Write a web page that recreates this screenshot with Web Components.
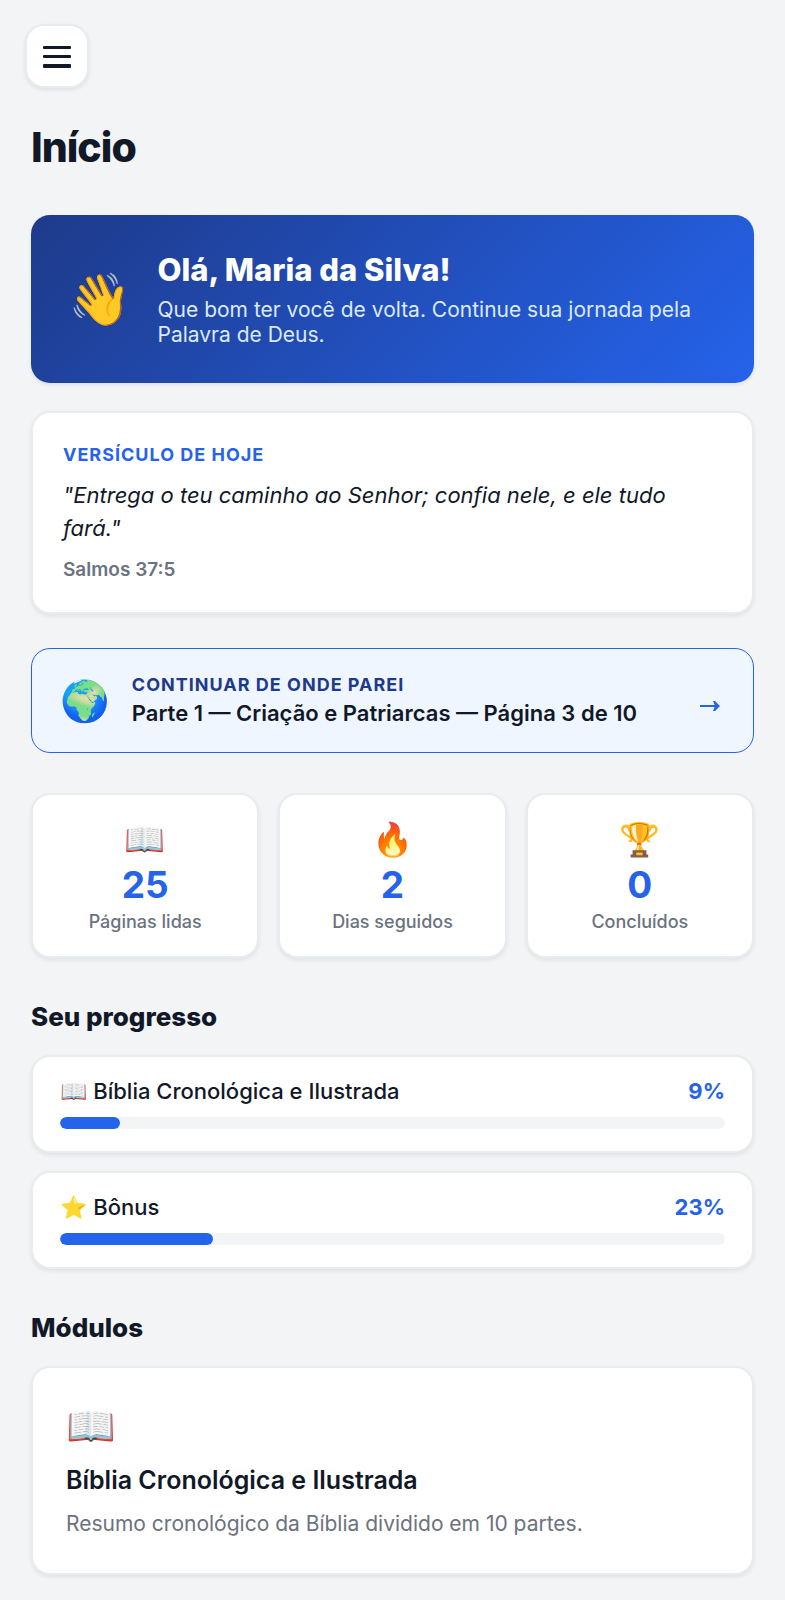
<!DOCTYPE html>
<html lang="pt-BR">
<head>
<meta charset="UTF-8">
<meta name="viewport" content="width=device-width, initial-scale=1">
<title>Início</title>
<style>
  :root {
    --bg: #f2f4f6;
    --card: #ffffff;
    --text: #111827;
    --muted: #6b7280;
    --primary: #2563eb;
    --primary-dark: #1e3a8a;
    --soft: #eff6ff;
    --border: #e9ebee;
    --track: #f3f4f6;
    --radius: 19px;
    --shadow: 0 2px 4px rgba(17, 24, 39, 0.08);
  }

  body {
    margin: 0;
    background: var(--bg);
    color: var(--text);
    font-family: Inter, "Liberation Sans", "Noto Color Emoji", sans-serif;
  }
</style>
</head>
<body>
<app-shell>
  <menu-button slot="menu"></menu-button>
  <span slot="title">Início</span>

  <welcome-banner icon="👋">
    <span slot="title">Olá, Maria da Silva!</span>
    Que bom ter você de volta. Continue sua jornada pela Palavra de Deus.
  </welcome-banner>

  <verse-card>
    <span slot="label">Versículo de hoje</span>
    "Entrega o teu caminho ao Senhor; confia nele, e ele tudo fará."
    <span slot="reference">Salmos 37:5</span>
  </verse-card>

  <continue-link icon="🌍" href="#parte-1">
    <span slot="label">Continuar de onde parei</span>
    Parte 1 — Criação e Patriarcas — Página 3 de 10
  </continue-link>

  <stat-row>
    <stat-card icon="📖" value="25">Páginas lidas</stat-card>
    <stat-card icon="🔥" value="2">Dias seguidos</stat-card>
    <stat-card icon="🏆" value="0">Concluídos</stat-card>
  </stat-row>

  <page-section>
    <span slot="title">Seu progresso</span>
    <progress-card percent="9">📖 Bíblia Cronológica e Ilustrada</progress-card>
    <progress-card percent="23">⭐ Bônus</progress-card>
  </page-section>

  <page-section>
    <span slot="title">Módulos</span>
    <module-card icon="📖" href="#biblia">
      <span slot="title">Bíblia Cronológica e Ilustrada</span>
      Resumo cronológico da Bíblia dividido em 10 partes.
    </module-card>
  </page-section>
</app-shell>

<script>
const base = `
  *, *::before, *::after { box-sizing: border-box; }
  :host { display: block; }
  h1, h2, h3, p, blockquote { margin: 0; }
  a { color: inherit; text-decoration: none; }
  .card {
    background: var(--card);
    border: 2px solid var(--border);
    border-radius: var(--radius);
    box-shadow: var(--shadow);
  }
`;

class AppShell extends HTMLElement {
  constructor() {
    super();
    this.attachShadow({ mode: 'open' });
    this.shadowRoot.innerHTML = `
      <style>
        ${base}
        header { padding: 24px 25px 0; }
        main { padding: 33px 31px 26px; }
        h1 {
          font-size: 41px;
          line-height: 52px;
          font-weight: 800;
          letter-spacing: -1px;
          margin-bottom: 42px;
        }
      </style>
      <header><slot name="menu"></slot></header>
      <main>
        <h1><slot name="title"></slot></h1>
        <slot></slot>
      </main>
    `;
  }
}

class MenuButton extends HTMLElement {
  constructor() {
    super();
    this.attachShadow({ mode: 'open' });
    this.shadowRoot.innerHTML = `
      <style>
        ${base}
        button {
          display: flex;
          align-items: center;
          justify-content: center;
          width: 64px;
          height: 64px;
          padding: 0;
          border-radius: 16px;
          color: var(--text);
          cursor: pointer;
        }
        svg { width: 28px; height: 28px; }
      </style>
      <button class="card" type="button" aria-label="Abrir menu">
        <svg viewBox="0 0 28 28" fill="currentColor">
          <rect x="0" y="4" width="28" height="3" rx="1"/>
          <rect x="0" y="13" width="28" height="3" rx="1"/>
          <rect x="0" y="22" width="28" height="4" rx="1"/>
        </svg>
      </button>
    `;
  }
}

class WelcomeBanner extends HTMLElement {
  constructor() {
    super();
    this.attachShadow({ mode: 'open' });
    this.shadowRoot.innerHTML = `
      <style>
        ${base}
        .banner {
          display: flex;
          align-items: center;
          gap: 26px;
          padding: 36px 37px;
          border-radius: var(--radius);
          background: linear-gradient(135deg, var(--primary-dark), var(--primary));
          box-shadow: var(--shadow);
          color: #fff;
        }
        .icon { font-size: 51px; line-height: 60px; }
        h2 { font-size: 31px; line-height: 38px; font-weight: 800; margin-bottom: 8px; }
        p { font-size: 21px; line-height: 25px; color: #dbeafe; }
      </style>
      <section class="banner">
        <span class="icon">${this.getAttribute('icon')}</span>
        <div>
          <h2><slot name="title"></slot></h2>
          <p><slot></slot></p>
        </div>
      </section>
    `;
  }
}

class VerseCard extends HTMLElement {
  constructor() {
    super();
    this.attachShadow({ mode: 'open' });
    this.shadowRoot.innerHTML = `
      <style>
        ${base}
        :host { margin-top: 28px; }
        .card { padding: 30px; }
        .label {
          font-size: 18px;
          line-height: 24px;
          font-weight: 700;
          letter-spacing: 1px;
          text-transform: uppercase;
          color: var(--primary);
          margin-bottom: 12px;
        }
        blockquote { font-size: 22px; line-height: 33px; font-style: italic; }
        .reference {
          font-size: 19px;
          line-height: 24px;
          font-weight: 600;
          color: var(--muted);
          margin-top: 13px;
        }
      </style>
      <section class="card">
        <p class="label"><slot name="label"></slot></p>
        <blockquote><slot></slot></blockquote>
        <p class="reference"><slot name="reference"></slot></p>
      </section>
    `;
  }
}

class ContinueLink extends HTMLElement {
  constructor() {
    super();
    this.attachShadow({ mode: 'open' });
    this.shadowRoot.innerHTML = `
      <style>
        ${base}
        :host { margin-top: 34px; }
        a {
          display: flex;
          align-items: center;
          gap: 22px;
          padding: 23px 32px 23px 28px;
          border: 1px solid var(--primary);
          border-radius: var(--radius);
          background: var(--soft);
        }
        .icon { font-size: 40px; line-height: 48px; }
        .body { flex: 1; }
        .label {
          font-size: 18px;
          line-height: 25px;
          font-weight: 700;
          letter-spacing: 1px;
          text-transform: uppercase;
          color: var(--primary-dark);
        }
        .text { font-size: 22px; line-height: 32px; font-weight: 600; }
        .arrow { width: 22px; height: 12px; margin-top: 10px; color: var(--primary); }
      </style>
      <a href="${this.getAttribute('href')}">
        <span class="icon">${this.getAttribute('icon')}</span>
        <div class="body">
          <p class="label"><slot name="label"></slot></p>
          <p class="text"><slot></slot></p>
        </div>
        <svg class="arrow" viewBox="0 0 22 12" aria-hidden="true">
          <path d="M1 6h17" fill="none" stroke="currentColor" stroke-width="2"/>
          <path d="M14 1h2l5 5-5 5h-2l2-5z" fill="currentColor"/>
        </svg>
      </a>
    `;
  }
}

class StatRow extends HTMLElement {
  constructor() {
    super();
    this.attachShadow({ mode: 'open' });
    this.shadowRoot.innerHTML = `
      <style>
        ${base}
        :host {
          display: grid;
          grid-template-columns: repeat(3, 1fr);
          gap: 19px;
          margin-top: 40px;
        }
      </style>
      <slot></slot>
    `;
  }
}

class StatCard extends HTMLElement {
  constructor() {
    super();
    this.attachShadow({ mode: 'open' });
    this.shadowRoot.innerHTML = `
      <style>
        ${base}
        .card {
          display: flex;
          flex-direction: column;
          align-items: center;
          padding: 24px 16px 22px;
        }
        .icon { font-size: 33px; line-height: 40px; }
        .value { font-size: 37px; line-height: 51px; font-weight: 700; color: var(--primary); }
        .label { font-size: 18px; line-height: 24px; font-weight: 500; color: var(--muted); }
      </style>
      <div class="card">
        <span class="icon">${this.getAttribute('icon')}</span>
        <span class="value">${this.getAttribute('value')}</span>
        <span class="label"><slot></slot></span>
      </div>
    `;
  }
}

class PageSection extends HTMLElement {
  constructor() {
    super();
    this.attachShadow({ mode: 'open' });
    this.shadowRoot.innerHTML = `
      <style>
        ${base}
        :host { margin-top: 43px; }
        h2 { font-size: 26px; line-height: 32px; font-weight: 800; margin-bottom: 22px; }
        .items { display: flex; flex-direction: column; gap: 18px; }
      </style>
      <section>
        <h2><slot name="title"></slot></h2>
        <div class="items"><slot></slot></div>
      </section>
    `;
  }
}

class ProgressCard extends HTMLElement {
  constructor() {
    super();
    this.attachShadow({ mode: 'open' });
    const percent = this.getAttribute('percent');

    this.shadowRoot.innerHTML = `
      <style>
        ${base}
        .card { padding: 19px 27px 22px; }
        .row {
          display: flex;
          justify-content: space-between;
          align-items: center;
          font-size: 22px;
          line-height: 30px;
          margin-bottom: 11px;
        }
        .name { font-weight: 500; }
        .percent { font-weight: 700; color: var(--primary); }
        .track { height: 12px; border-radius: 6px; background: var(--track); overflow: hidden; }
        .fill { width: ${percent}%; height: 100%; border-radius: 6px; background: var(--primary); }
      </style>
      <div class="card">
        <div class="row">
          <span class="name" id="name"><slot></slot></span>
          <span class="percent">${percent}%</span>
        </div>
        <div class="track" role="progressbar" aria-labelledby="name" aria-valuenow="${percent}">
          <div class="fill"></div>
        </div>
      </div>
    `;
  }
}

class ModuleCard extends HTMLElement {
  constructor() {
    super();
    this.attachShadow({ mode: 'open' });
    this.shadowRoot.innerHTML = `
      <style>
        ${base}
        a { display: block; padding: 34px 33px; }
        .icon { display: block; font-size: 40px; line-height: 48px; margin-bottom: 14px; }
        h3 { font-size: 25px; line-height: 32px; font-weight: 600; margin-bottom: 13px; }
        p { font-size: 21px; line-height: 30px; color: var(--muted); }
      </style>
      <a class="card" href="${this.getAttribute('href')}">
        <span class="icon">${this.getAttribute('icon')}</span>
        <h3><slot name="title"></slot></h3>
        <p><slot></slot></p>
      </a>
    `;
  }
}

customElements.define('app-shell', AppShell);
customElements.define('menu-button', MenuButton);
customElements.define('welcome-banner', WelcomeBanner);
customElements.define('verse-card', VerseCard);
customElements.define('continue-link', ContinueLink);
customElements.define('stat-row', StatRow);
customElements.define('stat-card', StatCard);
customElements.define('page-section', PageSection);
customElements.define('progress-card', ProgressCard);
customElements.define('module-card', ModuleCard);
</script>
</body>
</html>
